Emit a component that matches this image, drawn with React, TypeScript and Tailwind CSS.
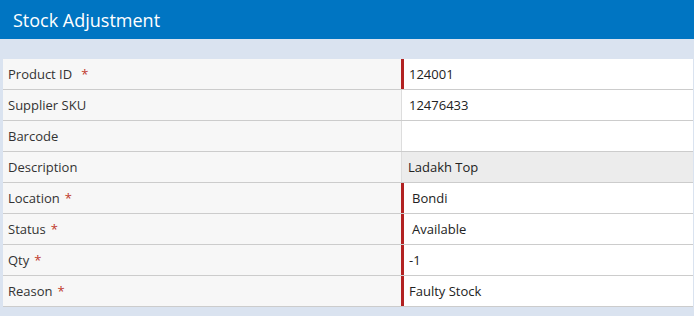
import React from "react";

type Row = { label: string; value: string; required?: boolean; readOnly?: boolean; pad?: boolean };

const rows: Row[] = [
  { label: "Product ID", value: "124001", required: true },
  { label: "Supplier SKU", value: "12476433" },
  { label: "Barcode", value: "" },
  { label: "Description", value: "Ladakh Top", readOnly: true },
  { label: "Location", value: "Bondi", required: true, pad: true },
  { label: "Status", value: "Available", required: true, pad: true },
  { label: "Qty", value: "-1", required: true },
  { label: "Reason", value: "Faulty Stock", required: true },
];

export default function App() {
  return (
    <div className="w-[694px] h-[316px] bg-[#dae3f0] overflow-hidden" style={{ fontFamily: '"Open Sans", sans-serif' }}>
      <div className="h-[39px] bg-[#0075c2] flex items-center pl-[13px]">
        <span className="text-white text-[18px] leading-none">Stock Adjustment</span>
      </div>
      <div className="ml-[3px] mr-[1px] mt-[20px]">
        {rows.map((r, i) => (
          <div key={i} className="flex h-[31px] border-b border-[#cccccc]">
            <div className="w-[398px] bg-[#f7f7f7] flex items-center pl-[5px] pt-[2px] text-[13px] text-[#333333]">
              {r.label}
              {r.required && (
                <span className={`text-[#c0392b] ${i === 0 ? "ml-[9px]" : "ml-[5px]"}`}>*</span>
              )}
            </div>
            <div
              className={`flex-1 flex items-center pt-[2px] text-[13px] text-[#222222] ${
                r.required ? "border-l-[3px] border-[#b22222]" : "border-l border-[#dddddd]"
              } ${r.readOnly ? "bg-[#ececec] pl-[6px]" : "bg-white"} ${
                !r.readOnly ? (r.pad ? "pl-[8px]" : r.required ? "pl-[5px]" : "pl-[7px]") : ""
              }`}
            >
              {r.value}
            </div>
          </div>
        ))}
      </div>
    </div>
  );
}
